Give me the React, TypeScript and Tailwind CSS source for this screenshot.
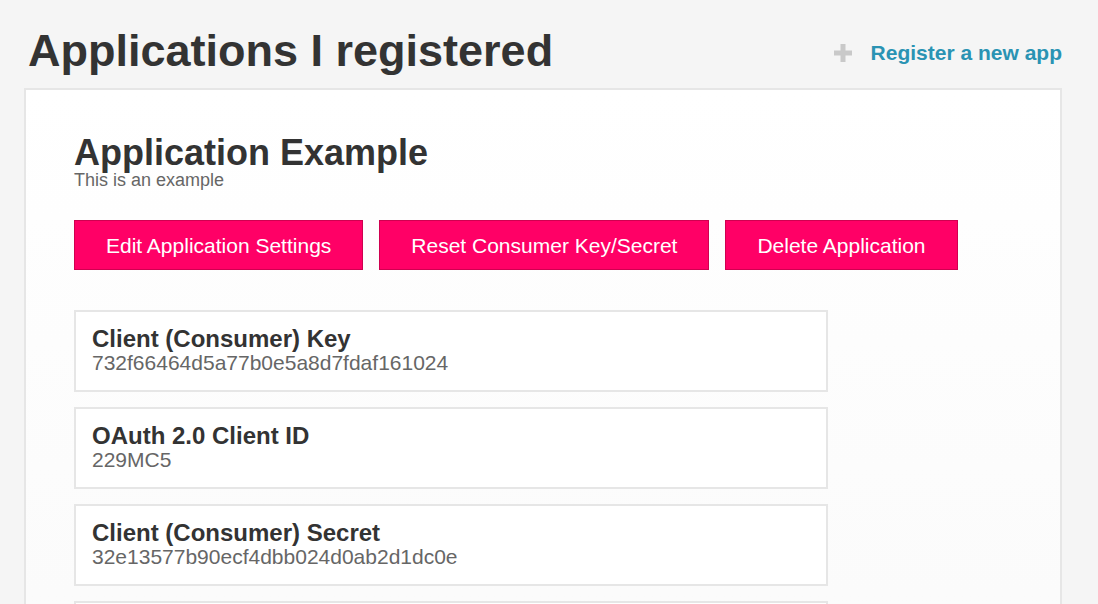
import React from "react";

interface Credential {
  label: string;
  value: string;
}

const credentials: Credential[] = [
  { label: "Client (Consumer) Key", value: "732f66464d5a77b0e5a8d7fdaf161024" },
  { label: "OAuth 2.0 Client ID", value: "229MC5" },
  { label: "Client (Consumer) Secret", value: "32e13577b90ecf4dbb024d0ab2d1dc0e" },
  { label: "Callback URL", value: "http://localhost:3000/callback" },
];

const actions = ["Edit Application Settings", "Reset Consumer Key/Secret", "Delete Application"];

function PlusIcon() {
  return (
    <svg width="20" height="18" viewBox="0 0 20 18" className="shrink-0">
      <rect x="7.5" y="0" width="5" height="18" fill="#c9c9c9" />
      <rect x="1" y="6.5" width="18" height="5" fill="#c9c9c9" />
    </svg>
  );
}

export default function App() {
  return (
    <div className="min-h-screen bg-[#f5f5f5] font-['Liberation_Sans',Arial,sans-serif] text-[#333]">
      {/* header */}
      <div className="flex items-start justify-between pl-[28px] pr-[36px] pt-[28px]">
        <h1 className="text-[45px] font-bold leading-[45px]">Applications I registered</h1>
        <a href="#" className="mt-[14px] flex items-center gap-[18px] text-[21px] font-bold leading-none text-[#2a93b3]">
          <PlusIcon />
          Register a new app
        </a>
      </div>

      {/* panel */}
      <div className="ml-[24px] mr-[36px] mt-[15px] border-2 border-[#e6e6e6] bg-gradient-to-b from-white to-[#fafafa] pb-10 pl-[48px] pt-[45px]">
        <h2 className="text-[36px] font-bold leading-none">Application Example</h2>
        <p className="text-[18px] leading-none text-[#666]">This is an example</p>

        <div className="mt-[31px] flex gap-4">
          {actions.map((label) => (
            <button
              key={label}
              className="h-[50px] border border-[#cf0050] bg-[#ff0066] px-[31px] text-[21px] leading-none text-white"
            >
              {label}
            </button>
          ))}
        </div>

        <div className="mt-[40px] flex w-[754px] flex-col gap-[15px]">
          {credentials.map((c) => (
            <div key={c.label} className="border-2 border-[#e6e6e6] bg-white pb-[16px] pl-4 pt-[14px]">
              <div className="text-[24px] font-bold leading-[25px] text-[#333]">{c.label}</div>
              <div className="text-[21px] leading-[23px] text-[#666]">{c.value}</div>
            </div>
          ))}
        </div>
      </div>
    </div>
  );
}
